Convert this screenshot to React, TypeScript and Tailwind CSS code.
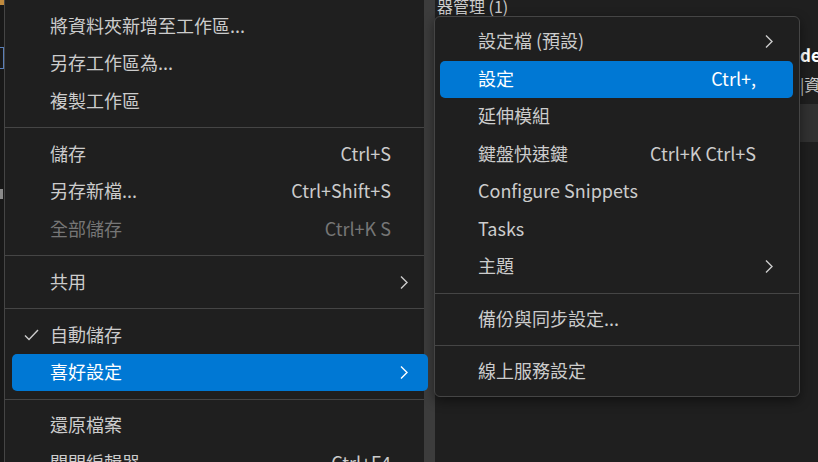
import React from "react";

type Item =
  | { sep: true }
  | {
      sep?: false;
      label: string;
      keys?: string;
      sub?: boolean;
      active?: boolean;
      disabled?: boolean;
      checked?: boolean;
    };

const mainItems: Item[] = [
  { label: "將資料夾新增至工作區..." },
  { label: "另存工作區為..." },
  { label: "複製工作區" },
  { sep: true },
  { label: "儲存", keys: "Ctrl+S" },
  { label: "另存新檔...", keys: "Ctrl+Shift+S" },
  { label: "全部儲存", keys: "Ctrl+K S", disabled: true },
  { sep: true },
  { label: "共用", sub: true },
  { sep: true },
  { label: "自動儲存", checked: true },
  { label: "喜好設定", sub: true, active: true },
  { sep: true },
  { label: "還原檔案" },
  { label: "關閉編輯器", keys: "Ctrl+F4" },
];

const subItems: Item[] = [
  { label: "設定檔 (預設)", sub: true },
  { label: "設定", keys: "Ctrl+,", active: true },
  { label: "延伸模組" },
  { label: "鍵盤快速鍵", keys: "Ctrl+K Ctrl+S" },
  { label: "Configure Snippets" },
  { label: "Tasks" },
  { label: "主題", sub: true },
  { sep: true },
  { label: "備份與同步設定..." },
  { sep: true },
  { label: "線上服務設定" },
];

const Chevron = () => (
  <svg width="10" height="15" viewBox="0 0 10 15" fill="none">
    <path d="M2 1.5 L8 7.5 L2 13.5" stroke="currentColor" strokeWidth="1.4" />
  </svg>
);

const Check = () => (
  <svg width="15" height="12" viewBox="0 0 15 12" fill="none">
    <path d="M1 6.5 L5 10.5 L14 1" stroke="currentColor" strokeWidth="1.4" />
  </svg>
);

const MenuRows = ({ items, sepH, rowCls }: { items: Item[]; sepH: string; rowCls: string }) => (
  <>
    {items.map((it, i) =>
      it.sep ? (
        <div key={i} className={`${sepH} flex items-center`}>
          <div className="h-px w-full bg-[#454545]" />
        </div>
      ) : (
        <div
          key={i}
          className={`relative z-10 flex h-[37.5px] items-center rounded-[5px] pl-[38px] pr-[37px] ${rowCls} ${
            it.active ? "bg-[#0078d4] text-white" : it.disabled ? "text-[#767676]" : "text-[#cccccc]"
          }`}
        >
          <span className="absolute left-[12px] flex items-center text-[#cccccc]">
            {it.checked && <Check />}
          </span>
          <span className="flex-1 whitespace-nowrap pb-[3px] leading-none">{it.label}</span>
          {it.keys && <span className="whitespace-nowrap pb-[3px] leading-none">{it.keys}</span>}
          {it.sub && (
            <span className="absolute right-[19px] flex items-center">
              <Chevron />
            </span>
          )}
        </div>
      )
    )}
  </>
);

export default function App() {
  return (
    <div
      className="relative h-[462px] w-[818px] overflow-hidden bg-[#1f1f1f] text-[18px]"
      style={{ fontFamily: '"Noto Sans CJK TC", "Noto Sans", sans-serif' }}
    >
      {/* workbench behind the menus */}
      <div className="flex h-full">
        <div className="flex w-[4px] flex-col gap-[42px] bg-[#181818]">
          <div className="h-[5px] bg-[#c08a3e]" />
          <div className="h-[22px] border-y border-r border-[#5a7fb8]" />
          <div className="mt-[78px] h-[10px] w-[3px] bg-[#8a8a8a]" />
        </div>
        <div className="w-[433px]" />
        <div className="w-[363px] overflow-hidden">
          <div className="-mt-[6px] whitespace-nowrap text-[16px] text-[#cccccc]">器管理 (1)</div>
        </div>
        <div className="flex w-[18px] flex-col overflow-hidden pt-[42px]">
          <div className="whitespace-nowrap text-[17px] font-bold text-white">der</div>
          <div className="mt-[4px] whitespace-nowrap text-[16px] text-[#cccccc]">|資料</div>
          <div className="mt-[8px] h-[38px] bg-[#313131]" />
        </div>
      </div>

      {/* main menu */}
      <div className="absolute left-[4px] top-0 h-full w-[431px] border-l border-[#454545] bg-[#1f1f1f] pt-[7.25px]">
        <div className="absolute right-0 top-0 h-full w-[11px] bg-[#3c3c3c]" />
        <MenuRows items={mainItems} sepH="h-[15.5px]" rowCls="mx-[7px]" />
      </div>

      {/* submenu */}
      <div className="absolute left-[434px] top-[16px] h-[381px] w-[366px] rounded-[6px] border border-[#454545] bg-[#1f1f1f] pt-[6px] shadow-[0_4px_12px_rgba(0,0,0,0.45)]">
        <MenuRows items={subItems} sepH="h-[15px]" rowCls="ml-[5px] mr-[6px]" />
      </div>
    </div>
  );
}
